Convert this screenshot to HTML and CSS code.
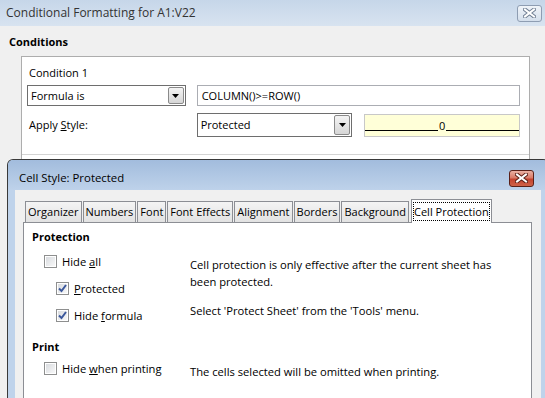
FILE: index.html
```html
<!DOCTYPE html>
<html lang="en">
<head>
    <meta charset="UTF-8">
    <title>Conditional Formatting for A1:V22</title>
    <link rel="stylesheet" href="styles.css">
</head>
<body>
    <div class="outer">
        <div class="titlebar">
            <span class="title">Conditional Formatting for A1:V22</span>
            <span class="close close-off">
                <svg width="13" height="10" viewBox="0 0 13 10"><path d="M2 1.5 L11 8.5 M11 1.5 L2 8.5" stroke="#6f7e93" stroke-width="4" stroke-linecap="square"/><path d="M2 1.5 L11 8.5 M11 1.5 L2 8.5" stroke="#fff" stroke-width="2" stroke-linecap="square"/></svg>
            </span>
        </div>
        <div class="outer-body">
            <div class="heading">Conditions</div>
            <div class="cond-box">
                <div class="cond">
                    <div class="cond-label">Condition 1</div>
                    <div class="cond-row">
                        <div class="combo combo-type">
                            <span class="combo-text">Formula is</span>
                            <span class="combo-btn"><svg width="7" height="4" viewBox="0 0 7 4"><path d="M0 0 H7 L3.5 4 Z" fill="#000"/></svg></span>
                        </div>
                        <div class="edit">COLUMN()&gt;=ROW()</div>
                    </div>
                    <div class="cond-row row-style">
                        <span class="apply">Apply <u>S</u>tyle:</span>
                        <div class="combo combo-style">
                            <span class="combo-text">Protected</span>
                            <span class="combo-btn"><svg width="7" height="4" viewBox="0 0 7 4"><path d="M0 0 H7 L3.5 4 Z" fill="#000"/></svg></span>
                        </div>
                        <div class="preview">
                            <span class="rule"></span>
                            <span class="zero">0</span>
                            <span class="rule"></span>
                        </div>
                    </div>
                </div>
            </div>
        </div>
    </div>

    <!-- second window sits on top of the first one -->
    <div class="inner">
        <div class="titlebar-in">
            <span class="title">Cell Style: Protected</span>
            <span class="close close-on">
                <svg width="13" height="10" viewBox="0 0 13 10"><path d="M2 1.5 L11 8.5 M11 1.5 L2 8.5" stroke="#5b1f16" stroke-width="4" stroke-linecap="square"/><path d="M2 1.5 L11 8.5 M11 1.5 L2 8.5" stroke="#fff" stroke-width="2" stroke-linecap="square"/></svg>
            </span>
        </div>
        <div class="inner-body">
            <div class="tabs">
                <span class="tab">Organizer</span>
                <span class="tab">Numbers</span>
                <span class="tab">Font</span>
                <span class="tab">Font Effects</span>
                <span class="tab">Alignment</span>
                <span class="tab">Borders</span>
                <span class="tab">Background</span>
                <span class="tab active"><span class="focus">Cell Protection</span></span>
            </div>
            <div class="page">
                <div class="section">
                    <h3>Protection</h3>
                    <div class="section-body">
                        <div class="opts">
                            <label class="opt"><span class="cb"></span><span>Hide <u>a</u>ll</span></label>
                            <label class="opt sub"><span class="cb checked"><svg width="9" height="9" viewBox="0 0 9 9"><path d="M1 4.5 L3.5 7 L8 1" stroke="#3b579b" stroke-width="2" fill="none"/></svg></span><span><u>P</u>rotected</span></label>
                            <label class="opt sub"><span class="cb checked"><svg width="9" height="9" viewBox="0 0 9 9"><path d="M1 4.5 L3.5 7 L8 1" stroke="#3b579b" stroke-width="2" fill="none"/></svg></span><span>Hide <u>f</u>ormula</span></label>
                        </div>
                        <div class="notes">
                            <p>Cell protection is only effective after the current sheet has been protected.</p>
                            <p>Select 'Protect Sheet' from the 'Tools' menu.</p>
                        </div>
                    </div>
                </div>
                <div class="section print">
                    <h3>Print</h3>
                    <div class="section-body">
                        <div class="opts">
                            <label class="opt"><span class="cb"></span><span>Hide <u>w</u>hen printing</span></label>
                        </div>
                        <div class="notes">
                            <p>The cells selected will be omitted when printing.</p>
                        </div>
                    </div>
                </div>
            </div>
        </div>
    </div>
</body>
</html>
```

FILE: styles.css
```css
* { box-sizing: border-box; }
body { margin: 0; width: 545px; height: 398px; overflow: hidden; position: relative; background: #f0f0f0; font-family: "Open Sans", sans-serif; font-size: 11px; line-height: 16px; color: #000; }
u { text-decoration: underline; }

/* outer dialog */
.titlebar { height: 26px; display: flex; align-items: center; padding: 0 3px 0 6px; background: linear-gradient(#c6d6e9, #d8e3f0); color: #333; font-size: 12px; }
.close { margin-left: auto; width: 25px; height: 17px; border-radius: 3px; display: flex; align-items: center; justify-content: center; }
.close-off { border: 1px solid #8e9db2; background: linear-gradient(#f0f4f9, #d4dfec); }
.close-on { border: 1px solid #5a2018; background: linear-gradient(#eab0a3 0%, #d97a68 45%, #c4432f 55%, #cf6248 100%); }

.outer-body { padding: 8px 0 0 9px; }
.heading { font-weight: 700; }
.cond-box { margin: 6px 0 0 12px; width: 509px; height: 110px; background: #fff; border: 1px solid #adadad; border-bottom: none; }
.cond { padding: 8px 9px 17px 5px; border-bottom: 1px solid #d4d4d4; }
.cond-label { padding-left: 2px; }
.cond-row { display: flex; align-items: center; margin-top: 4px; }
.row-style { margin-top: 7px; }

.combo { display: flex; align-items: center; background: #fff; border: 1px solid #6e6e6e; }
.combo-type { width: 159px; height: 21px; }
.combo-style { width: 156px; height: 24px; }
.combo-text { flex: 1; padding-left: 3px; }
.combo-btn { width: 16px; height: calc(100% - 2px); margin-right: 1px; display: flex; align-items: center; justify-content: center; border: 1px solid #8a8a8a; border-radius: 2px; background: linear-gradient(#f4f4f4, #d6d6d6); }

.edit { width: 324px; height: 21px; margin-left: 11px; padding-left: 4px; border: 1px solid #abadb3; background: #fff; line-height: 19px; }
.apply { width: 170px; padding-left: 2px; }
.preview { width: 156px; height: 23px; margin-left: 12px; display: flex; align-items: flex-end; padding: 0 0 5px; background: #ffffd8; border: 1px solid #c8c8c8; }
.rule { flex: 1; border-bottom: 1px solid #000; }
.zero { line-height: 11px; padding: 0 1px; }

/* cell style dialog */
.inner { position: absolute; left: 7px; top: 159px; width: 542px; height: 239px; border: 1px solid #393939; border-bottom: none; border-radius: 6px 6px 0 0; background: #bfd3eb; }
.titlebar-in { height: 30px; display: flex; align-items: center; padding: 6px 14px 0 11px; border-radius: 5px 5px 0 0; background: linear-gradient(#a2bcdd, #bed2ea); font-size: 11.4px; }
.inner-body { margin: 0 7px; height: 208px; background: #f0f0f0; padding: 9px 9px 0 8px; }

.tabs { display: flex; align-items: flex-end; height: 23px; margin-left: 2px; position: relative; z-index: 1; }
.tab { height: 21px; padding: 0 2px; margin-right: 1px; border: 1px solid #8c8e94; border-bottom: none; background: linear-gradient(#f4f4f4, #e2e2e2); line-height: 20px; white-space: nowrap; }
.tab.active { height: 24px; margin: 0 0 -1px 1px; padding: 2px 1px 0; background: #fff; }
.focus { display: block; line-height: 17px; border: 1px dotted #000; }

.page { height: 176px; background: #fff; border: 1px solid #8c8e94; border-bottom: none; padding: 6px 8px; }
.section h3 { margin: 0; font-size: 11px; font-weight: 700; line-height: 16px; }
.section-body { display: flex; font-size: 11.2px; }
.opts { width: 158px; display: flex; flex-direction: column; gap: 10px; padding-top: 8px; }
.opt { display: flex; align-items: center; gap: 5px; height: 17px; margin-left: 12px; white-space: nowrap; }
.opt.sub { margin-left: 24px; }
.cb { width: 13px; height: 13px; flex: none; display: flex; align-items: center; justify-content: center; border: 1px solid #8e8f8f; background: linear-gradient(135deg, #d5d8dc, #fbfbfb); box-shadow: inset 0 0 0 1px #fff; }
.notes { flex: 1; padding: 12px 14px 0 0; }
.notes p { margin: 0 0 13px; line-height: 16.7px; }
.notes p:last-child { margin-bottom: 0; }
.print { margin-top: 15px; }
.print .opts { padding-top: 5px; }
.print .notes { padding-top: 9px; }
```
